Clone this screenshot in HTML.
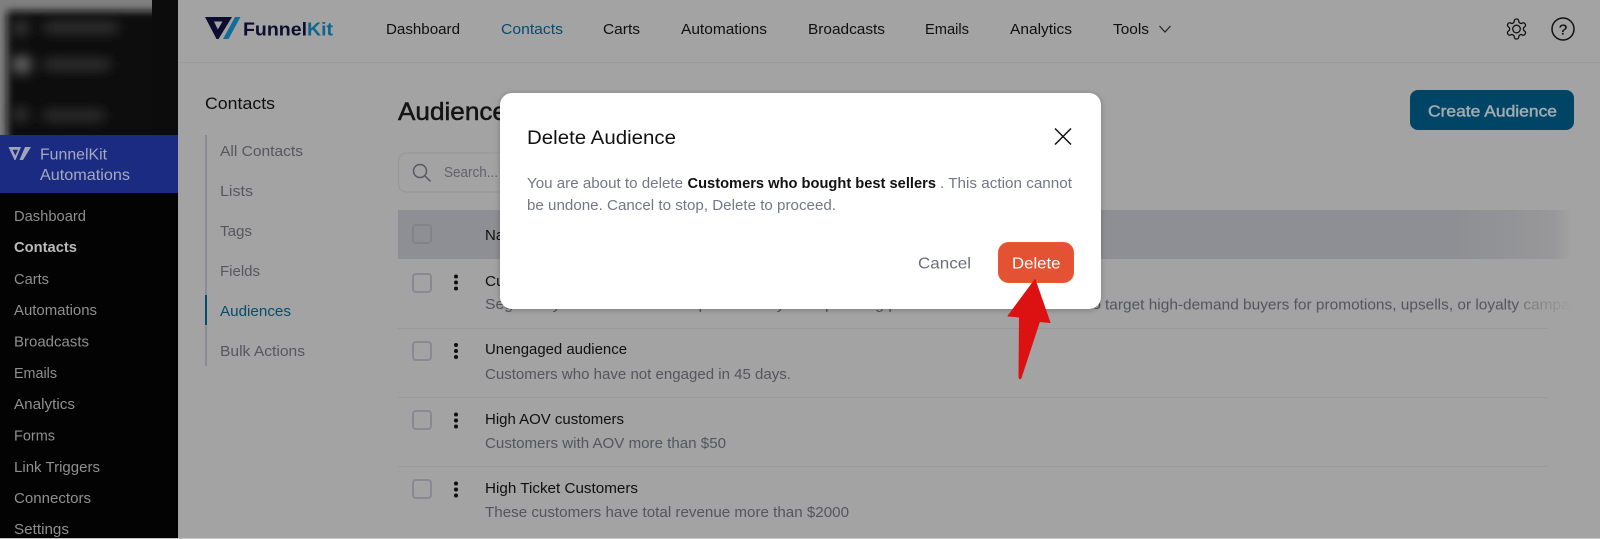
<!DOCTYPE html>
<html lang="en"><head><meta charset="utf-8"><title>Delete Audience</title>
<style>
html,body{margin:0;padding:0;width:1600px;height:539px;overflow:hidden;background:#a3a3a3}
svg{display:block}
text{font-family:"Liberation Sans",Arial,sans-serif;font-size:15px}
.nav{fill:#0f0f0f}.sb{fill:#8f8f8f}.sub{fill:#56575f}.t{fill:#0f0f0f}.d{fill:#54555d}
.m{fill:#74778a}
.cb{fill:none;stroke:#888992;stroke-width:2}
.ln{stroke:#9a9a9e;stroke-width:1}
.dot{fill:#0f0f0f}
</style></head><body>
<svg xmlns="http://www.w3.org/2000/svg" width="1600" height="539" viewBox="0 0 1600 539">
<defs>
<filter id="b3" x="-20%" y="-20%" width="140%" height="140%"><feGaussianBlur stdDeviation="4"/></filter>
<filter id="b4" x="-30%" y="-100%" width="160%" height="300%"><feGaussianBlur stdDeviation="6"/></filter>
<clipPath id="tc"><rect x="0" y="0" width="152" height="135"/></clipPath>
<linearGradient id="f1" x1="0" x2="1" y1="0" y2="0"><stop offset="0" stop-color="#a3a3a3" stop-opacity="0"/><stop offset=".2" stop-color="#a3a3a3" stop-opacity=".5"/><stop offset=".8" stop-color="#a3a3a3" stop-opacity=".85"/><stop offset="1" stop-color="#a3a3a3"/></linearGradient>
<linearGradient id="hd" x1="0" x2="1" y1="0" y2="0"><stop offset="0" stop-color="#8e8f94"/><stop offset=".9" stop-color="#8e8f94"/><stop offset=".985" stop-color="#98989a"/><stop offset="1" stop-color="#a3a3a3"/></linearGradient>
</defs>

<rect width="1600" height="539" fill="#a3a3a3"/>

<!-- WP sidebar -->
<rect x="0" y="0" width="178" height="538" fill="#030303"/>
<rect x="0" y="0" width="178" height="135" fill="#0c0c0c"/>
<g clip-path="url(#tc)">
<rect x="0" y="0" width="152" height="135" fill="#808080"/>
<rect x="7" y="11" width="165" height="145" fill="#0e0e0e" filter="url(#b3)"/>
<g filter="url(#b4)">
<rect x="13" y="21" width="15" height="14" rx="5" fill="#3a3a3a"/><rect x="44" y="23" width="74" height="9" fill="#3a3a3a"/>
<rect x="12" y="56" width="19" height="17" rx="6" fill="#666"/><rect x="44" y="60" width="66" height="9" fill="#3a3a3a"/>
<rect x="13" y="108" width="15" height="13" rx="5" fill="#383838"/><rect x="44" y="111" width="60" height="9" fill="#383838"/>
</g></g>
<rect x="0" y="135" width="178" height="58" fill="#1b2b82"/>
<path d="M8.500 147H21L15.500 160H14.500ZM12.500 149.800H18L15.300 155.500Z" fill="#a0a5ba" fill-rule="evenodd"/>
<path d="M25 147H31L23 160H19.500Z" fill="#a0a5ba"/>
<text x="40" y="159.500" textLength="67" lengthAdjust="spacingAndGlyphs" style="fill:#a5a9bc;font-size:15.500px">FunnelKit</text>
<text x="40" y="180" textLength="90" lengthAdjust="spacingAndGlyphs" style="fill:#a5a9bc;font-size:15.500px">Automations</text>
<text class="sb" x="14" y="221" textLength="72" lengthAdjust="spacingAndGlyphs">Dashboard</text>
<text x="14" y="252" textLength="63" lengthAdjust="spacingAndGlyphs" style="fill:#bbb;font-weight:700">Contacts</text>
<text class="sb" x="14" y="284" textLength="35" lengthAdjust="spacingAndGlyphs">Carts</text>
<text class="sb" x="14" y="315" textLength="83" lengthAdjust="spacingAndGlyphs">Automations</text>
<text class="sb" x="14" y="346.500" textLength="75" lengthAdjust="spacingAndGlyphs">Broadcasts</text>
<text class="sb" x="14" y="378" textLength="43" lengthAdjust="spacingAndGlyphs">Emails</text>
<text class="sb" x="14" y="409" textLength="61" lengthAdjust="spacingAndGlyphs">Analytics</text>
<text class="sb" x="14" y="440.500" textLength="41" lengthAdjust="spacingAndGlyphs">Forms</text>
<text class="sb" x="14" y="472" textLength="86" lengthAdjust="spacingAndGlyphs">Link Triggers</text>
<text class="sb" x="14" y="503" textLength="77" lengthAdjust="spacingAndGlyphs">Connectors</text>
<text class="sb" x="14" y="534" textLength="55" lengthAdjust="spacingAndGlyphs">Settings</text>

<!-- Top bar -->
<line x1="178" y1="62.500" x2="1600" y2="62.500" stroke="#9b9b9b"/>
<path d="M205 17H232L218.500 39H216.500ZM214 21.500H222.500L217.800 29.500Z" fill="#0d0d30" fill-rule="evenodd"/>
<path d="M235 17H240.500L228.500 39H223Z" fill="#126c9c"/>
<text x="243" y="35.500" textLength="64" lengthAdjust="spacingAndGlyphs" style="fill:#0d0d30;font-size:18px;font-weight:700">Funnel</text>
<text x="307" y="35.500" textLength="26" lengthAdjust="spacingAndGlyphs" style="fill:#0f6590;font-size:18px;font-weight:700">Kit</text>
<text class="nav" x="386" y="34" textLength="74" lengthAdjust="spacingAndGlyphs">Dashboard</text>
<text x="501" y="34" textLength="62" lengthAdjust="spacingAndGlyphs" style="fill:#034d72">Contacts</text>
<text class="nav" x="603" y="34" textLength="37" lengthAdjust="spacingAndGlyphs">Carts</text>
<text class="nav" x="681" y="34" textLength="86" lengthAdjust="spacingAndGlyphs">Automations</text>
<text class="nav" x="808" y="34" textLength="77" lengthAdjust="spacingAndGlyphs">Broadcasts</text>
<text class="nav" x="925" y="34" textLength="44" lengthAdjust="spacingAndGlyphs">Emails</text>
<text class="nav" x="1010" y="34" textLength="62" lengthAdjust="spacingAndGlyphs">Analytics</text>
<text class="nav" x="1113" y="34" textLength="36" lengthAdjust="spacingAndGlyphs">Tools</text>
<path d="M1159.500 26L1165 32L1170.500 26" fill="none" stroke="#222" stroke-width="1.200"/>
<g transform="translate(1504.500 17)" fill="none" stroke="#111" stroke-width="1.300"><path d="M12.220 2h-.44a2 2 0 0 0-2 2v.18a2 2 0 0 1-1 1.730l-.43.25a2 2 0 0 1-2 0l-.15-.08a2 2 0 0 0-2.730.73l-.22.38a2 2 0 0 0 .73 2.730l.15.1a2 2 0 0 1 1 1.720v.51a2 2 0 0 1-1 1.740l-.15.09a2 2 0 0 0-.73 2.730l.22.38a2 2 0 0 0 2.730.73l.15-.08a2 2 0 0 1 2 0l.43.25a2 2 0 0 1 1 1.730V20a2 2 0 0 0 2 2h.44a2 2 0 0 0 2-2v-.18a2 2 0 0 1 1-1.730l.43-.25a2 2 0 0 1 2 0l.15.08a2 2 0 0 0 2.730-.73l.22-.39a2 2 0 0 0-.73-2.730l-.15-.08a2 2 0 0 1-1-1.740v-.5a2 2 0 0 1 1-1.740l.15-.09a2 2 0 0 0 .73-2.730l-.22-.38a2 2 0 0 0-2.730-.73l-.15.08a2 2 0 0 1-2 0l-.43-.25a2 2 0 0 1-1-1.730V4a2 2 0 0 0-2-2z"/><circle cx="12" cy="12" r="3.800"/></g>
<circle cx="1563" cy="29" r="11" fill="none" stroke="#111" stroke-width="1.500"/>
<text x="1563" y="34.500" text-anchor="middle" style="fill:#111;font-size:15px;stroke:#111;stroke-width:.3">?</text>

<!-- Sub nav -->
<text x="205" y="109" textLength="70" lengthAdjust="spacingAndGlyphs" style="fill:#0f0f0f;font-size:16.500px">Contacts</text>
<rect x="205" y="135" width="2" height="231" fill="#8a8b95"/>
<rect x="205" y="295" width="2" height="30" fill="#034d72"/>
<text class="sub" x="220" y="156" textLength="83" lengthAdjust="spacingAndGlyphs">All Contacts</text>
<text class="sub" x="220" y="196" textLength="33" lengthAdjust="spacingAndGlyphs">Lists</text>
<text class="sub" x="220" y="236" textLength="32" lengthAdjust="spacingAndGlyphs">Tags</text>
<text class="sub" x="220" y="276" textLength="40" lengthAdjust="spacingAndGlyphs">Fields</text>
<text x="220" y="316" textLength="71" lengthAdjust="spacingAndGlyphs" style="fill:#034d72">Audiences</text>
<text class="sub" x="220" y="356" textLength="85" lengthAdjust="spacingAndGlyphs">Bulk Actions</text>

<!-- Header -->
<text x="398" y="120" textLength="122" lengthAdjust="spacingAndGlyphs" style="fill:#141414;font-size:25px;stroke:#141414;stroke-width:.5">Audiences</text>
<rect x="1410" y="90" width="164" height="40" rx="8" fill="#004566"/>
<text x="1428" y="116.500" textLength="129" lengthAdjust="spacingAndGlyphs" style="fill:#a3abb1;font-size:16px;stroke:#a3abb1;stroke-width:.45">Create Audience</text>

<!-- Search -->
<rect x="398.500" y="153" width="300" height="39" rx="8" fill="none" stroke="#96969a"/>
<circle cx="420" cy="171" r="6.500" fill="none" stroke="#54555d" stroke-width="1.400"/>
<line x1="425" y1="176" x2="430.500" y2="181.500" stroke="#54555d" stroke-width="1.400"/>
<text x="444" y="177" textLength="54" lengthAdjust="spacingAndGlyphs" style="font-size:14.500px;fill:#62636c">Search...</text>

<!-- Table -->
<rect x="398" y="210" width="1174" height="49" fill="url(#hd)"/>
<rect class="cb" x="413" y="225" width="18" height="18" rx="3" style="stroke:#82838a"/>
<text class="t" x="485" y="240" textLength="40" lengthAdjust="spacingAndGlyphs">Name</text>

<rect class="cb" x="413" y="274" width="18" height="18" rx="3"/>
<circle class="dot" cx="456" cy="276.500" r="2"/><circle class="dot" cx="456" cy="282.500" r="2"/><circle class="dot" cx="456" cy="288.500" r="2"/>
<text class="t" x="485" y="286" textLength="240" lengthAdjust="spacingAndGlyphs">Customers who bought best sellers</text>
<text class="d" x="485" y="309" textLength="616" lengthAdjust="spacingAndGlyphs">Segment your customers who purchased your top-selling products. Use this audience to</text>
<text class="d" x="1105" y="309.500" textLength="493" lengthAdjust="spacingAndGlyphs">target high-demand buyers for promotions, upsells, or loyalty campaigns</text>
<rect x="1517" y="295" width="56" height="26" fill="url(#f1)"/>
<rect x="1573" y="295" width="27" height="26" fill="#a3a3a3"/>
<line class="ln" x1="398" y1="328.500" x2="1548" y2="328.500"/>

<rect class="cb" x="413" y="342" width="18" height="18" rx="3"/>
<circle class="dot" cx="456" cy="345" r="2"/><circle class="dot" cx="456" cy="351" r="2"/><circle class="dot" cx="456" cy="357" r="2"/>
<text class="t" x="485" y="354" textLength="142" lengthAdjust="spacingAndGlyphs">Unengaged audience</text>
<text class="d" x="485" y="379" textLength="306" lengthAdjust="spacingAndGlyphs">Customers who have not engaged in 45 days.</text>
<line class="ln" x1="398" y1="397.500" x2="1548" y2="397.500"/>

<rect class="cb" x="413" y="411" width="18" height="18" rx="3"/>
<circle class="dot" cx="456" cy="414.500" r="2"/><circle class="dot" cx="456" cy="420.500" r="2"/><circle class="dot" cx="456" cy="426.500" r="2"/>
<text class="t" x="485" y="424" textLength="139" lengthAdjust="spacingAndGlyphs">High AOV customers</text>
<text class="d" x="485" y="448" textLength="241" lengthAdjust="spacingAndGlyphs">Customers with AOV more than $50</text>
<line class="ln" x1="398" y1="466.500" x2="1548" y2="466.500"/>

<rect class="cb" x="413" y="480" width="18" height="18" rx="3"/>
<circle class="dot" cx="456" cy="483.500" r="2"/><circle class="dot" cx="456" cy="489.500" r="2"/><circle class="dot" cx="456" cy="495.500" r="2"/>
<text class="t" x="485" y="493" textLength="153" lengthAdjust="spacingAndGlyphs">High Ticket Customers</text>
<text class="d" x="485" y="517" textLength="364" lengthAdjust="spacingAndGlyphs">These customers have total revenue more than $2000</text>

<rect x="0" y="538" width="1600" height="1" fill="#c6c6c6"/>

<!-- Modal -->
<rect x="500" y="93" width="601" height="216" rx="12" fill="#fff" style="filter:drop-shadow(0 1px 3px rgba(0,0,0,.25))"/>
<text x="527" y="144" textLength="149" lengthAdjust="spacingAndGlyphs" style="fill:#111;font-size:19px">Delete Audience</text>
<path d="M1055 128.500L1071 144.500M1071 128.500L1055 144.500" stroke="#111" stroke-width="1.500" fill="none"/>
<text class="m" x="527" y="188" textLength="156" lengthAdjust="spacingAndGlyphs" style="font-size:14.500px">You are about to delete</text>
<text x="687.500" y="188" textLength="248.500" lengthAdjust="spacingAndGlyphs" style="fill:#111;font-size:14.500px;font-weight:700">Customers who bought best sellers</text>
<text class="m" x="940" y="188" textLength="132" lengthAdjust="spacingAndGlyphs" style="font-size:14.500px">. This action cannot</text>
<text class="m" x="527" y="210" textLength="309" lengthAdjust="spacingAndGlyphs" style="font-size:14.500px">be undone. Cancel to stop, Delete to proceed.</text>
<text x="918" y="268.500" textLength="53" lengthAdjust="spacingAndGlyphs" style="fill:#6c6f7a;font-size:16px">Cancel</text>
<rect x="998.500" y="242.500" width="75" height="40" rx="10" fill="#e35333" stroke="#ee5a30"/>
<text x="1012" y="268.500" textLength="48.500" lengthAdjust="spacingAndGlyphs" style="fill:#fff;font-size:16px">Delete</text>

<!-- Arrow -->
<path d="M1035 279.500L1050 322.500L1039.500 321.500L1021 378Q1019.500 380 1019 377L1019.500 317L1008 316Z" fill="#dc1212" stroke="#dc1212" stroke-width="1" stroke-linejoin="round"/>
</svg>
</body></html>
